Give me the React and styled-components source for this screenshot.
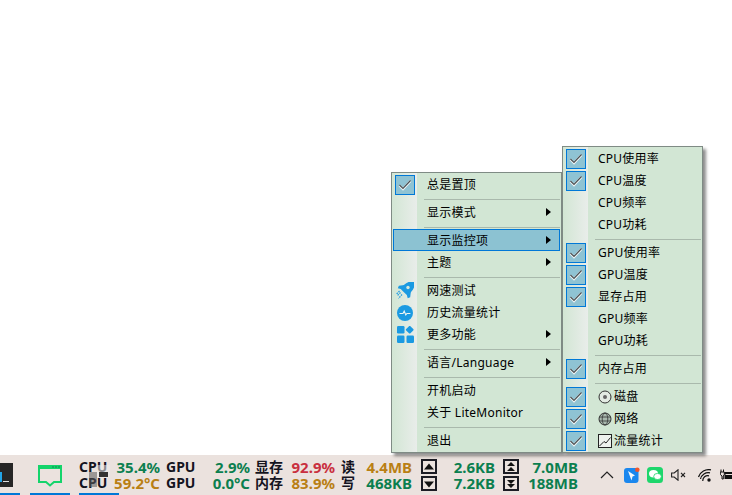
import React from 'react'
import styled, { createGlobalStyle } from 'styled-components'

const GlobalStyle = createGlobalStyle`
  html, body { margin: 0; padding: 0; background: #fff; }
  body { font-family: "Noto Sans", "Noto Sans CJK SC", sans-serif; }
`

const Page = styled.div`
  position: relative;
  width: 732px;
  height: 495px;
  overflow: hidden;
  display: flex;
  flex-direction: column;
  justify-content: flex-end;
`

/* context menus */
const Menu = styled.div`
  position: absolute;
  left: ${p => p.$left}px;
  top: ${p => p.$top}px;
  width: ${p => p.$width}px;
  box-sizing: border-box;
  padding-bottom: 1px;
  border: 1px solid #7f8b85;
  background: linear-gradient(90deg, #d2e6d4 0, #e9edea 25px, #d2e6d4 25px);
  box-shadow: 3px 3px 3px rgba(0, 0, 0, 0.45);
  font-size: 12px;
  letter-spacing: 0.25px;
  color: #000;
  z-index: ${p => p.$z || 1};
`
const Row = styled.div`
  display: flex;
  align-items: center;
  box-sizing: border-box;
  height: 22px;
  margin: 0 1px;
  padding-left: 1px;
  background: ${p => (p.$active ? '#8cc2d2' : 'transparent')};
  outline: ${p => (p.$active ? '1px solid #0078d7' : 'none')};
  outline-offset: -1px;
`
const Slot = styled.div`
  flex: none;
  width: 22px;
  height: 20px;
  margin-top: 1px;
  margin-right: 11px;
  display: flex;
  align-items: center;
  justify-content: center;
`
const CheckBox = styled.div`
  box-sizing: border-box;
  width: 20px;
  height: 20px;
  border: 1px solid #0078d7;
  background: #8fc3d3;
  display: flex;
  align-items: center;
  justify-content: center;
`
const Label = styled.span`
  flex: 1;
  display: flex;
  align-items: center;
  gap: 2px;
  white-space: nowrap;
  line-height: 20px;
  padding-top: 2px;
`
const Arrow = styled.i`
  flex: none;
  width: 0;
  height: 0;
  margin-right: 9px;
  border-left: 5px solid #000;
  border-top: 4px solid transparent;
  border-bottom: 4px solid transparent;
`
const Separator = styled.div`
  height: 1px;
  margin: 4px 1px 1px 32px;
  background: #a9b9ac;
`

/* taskbar */
const Taskbar = styled.div`
  position: relative;
  height: 40px;
  flex: none;
  display: flex;
  background: #ebe2de;
`
const TaskButton = styled.div`
  flex: none;
  box-sizing: border-box;
  width: ${p => p.$width}px;
  margin-left: ${p => p.$gap || 0}px;
  height: 40px;
  padding-top: ${p => p.$top}px;
  border-bottom: 2px solid #0078d7;
`
const Tile = styled.div`
  box-sizing: border-box;
  width: 13px;
  height: 24px;
  background: #262626;
  display: flex;
  align-items: flex-end;
  gap: 1px;
  padding-bottom: 5px;
`
const TileCaret = styled.span`
  width: 2px;
  height: 10px;
  background: #22a5e8;
`
const TilePrompt = styled.span`
  width: 6px;
  height: 1px;
  background: #ddd;
`
const ChatIconWrap = styled.div`
  display: flex;
  justify-content: center;
`
const GhostIcon = styled.svg`
  position: absolute;
  left: 89px;
  top: 10px;
  z-index: 2;
`
const GhostBar = styled.div`
  position: absolute;
  left: 79px;
  bottom: 0;
  width: 40px;
  height: 2px;
  background: #0078d7;
`
const Monitor = styled.div`
  flex: none;
  margin-left: 9px;
  padding-top: 4px;
  display: flex;
  font-weight: 700;
  font-size: 14px;
  line-height: 16px;
  white-space: nowrap;
`
const Col = styled.div`
  flex: none;
  width: ${p => p.$width}px;
  margin-left: ${p => p.$gap || 0}px;
  color: #14141e;
`
const Values = styled(Col)`
  text-align: right;
  font-size: 15px;
`
const Value = styled.div`
  height: 16px;
  color: ${p => p.$color};
`
const ArrowCol = styled.div`
  flex: none;
  margin-left: ${p => p.$gap}px;
  display: flex;
  flex-direction: column;
  gap: 2px;
`
const ArrowBox = styled.div`
  box-sizing: border-box;
  width: 16px;
  height: 15px;
  border: 2px solid #1c1c24;
  display: flex;
  align-items: center;
  justify-content: center;
`
const Tray = styled.div`
  margin-left: auto;
  display: flex;
  align-items: center;
  height: 30px;
  margin-top: 5px;
`
const TrayItem = styled.div`
  flex: none;
  width: ${p => p.$width}px;
  margin-left: ${p => p.$gap}px;
  display: flex;
  justify-content: center;
`

const Check = () => (
  <svg width="16" height="14" viewBox="0 0 16 14">
    <path d="M2.5 7.5 L6 11 L13.5 3" fill="none" stroke="#f2f6f6" strokeWidth="2.4" />
    <path d="M2.5 7 L6 10.5 L13.5 2.5" fill="none" stroke="#4b4f52" strokeWidth="1.2" />
  </svg>
)

const Rocket = () => (
  <svg width="18" height="17" viewBox="0 0 18 17">
    <g transform="rotate(45 11 7)" fill="#1b9ae2">
      <path d="M11-3.500c3.500 2.500 5 6 5 9.500 0 2-.5 4-1.200 5.500H7.200C6.500 10 6 8 6 6c0-3.500 1.500-7 5-9.500z" />
      <path d="M6.500 6 3 10.500 4 13l3.500-2zM15.500 6 19 10.500 18 13l-3.500-2z" />
    </g>
    <circle cx="12" cy="5.500" r="1.700" fill="#d6e8dc" />
    <path stroke="#1b9ae2" strokeWidth="1.200" strokeDasharray="1.500 1" d="M4.500 10.500 1 14M6 12.500 2.500 16.500M3.500 9 .5 12" />
  </svg>
)

const Pulse = () => (
  <svg width="16" height="16" viewBox="0 0 16 16">
    <circle cx="8" cy="8" r="8" fill="#1b9ae2" />
    <path d="M2.500 8.500h3.500l1.200-2.500 1.600 4 1.100-1.500h3.500" fill="none" stroke="#eef6f4" strokeWidth="1.100" />
  </svg>
)

const Blocks = () => (
  <svg width="17" height="17" viewBox="0 0 17 17">
    <g fill="#1b9ae2">
      <rect x="0" y="0" width="7.500" height="7.500" rx="1.200" />
      <rect x="9.700" y="0.700" width="6" height="6" rx="1" transform="rotate(45 12.700 3.700)" />
      <rect x="0" y="9.500" width="7.500" height="7.500" rx="1.200" />
      <rect x="9.500" y="9.500" width="7.500" height="7.500" rx="1.200" />
    </g>
  </svg>
)

const DiskIcon = () => (
  <svg width="14" height="14" viewBox="0 0 14 14">
    <circle cx="7" cy="7" r="6" fill="#e3ebe3" stroke="#333" />
    <circle cx="7" cy="7" r="2" fill="#666" />
  </svg>
)

const GlobeIcon = () => (
  <svg width="14" height="14" viewBox="0 0 14 14" fill="none" stroke="#333">
    <circle cx="7" cy="7" r="6" fill="#a9b8ae" />
    <ellipse cx="7" cy="7" rx="2.800" ry="6" strokeWidth="0.800" />
    <path d="M1 5h12M1 9h12" strokeWidth="0.800" />
  </svg>
)

const ChartIcon = () => (
  <svg width="14" height="14" viewBox="0 0 14 14" fill="none">
    <rect x="0.500" y="0.500" width="13" height="13" stroke="#222" fill="#eef2ee" />
    <path d="M1.500 12 6 7.500l2 1.500 4.500-5.500" stroke="#222" />
  </svg>
)

const ChatIcon = () => (
  <svg width="26" height="24" viewBox="0 0 26 24">
    <path d="M2 2h22v16h-7l-4 3.500-4-3.500H2z" fill="#ebe2de" stroke="#14d46b" strokeWidth="2" />
    <rect x="1" y="1" width="24" height="4" fill="#14d46b" />
    <path d="M15 3h2M18 3h2M21 3h2" stroke="#0c8c50" strokeWidth="1" />
  </svg>
)

const Triangle = ({ up, bar }) => (
  <svg width="10" height="10" viewBox="0 0 10 10">
    {bar ? (
      <path fill="#111" d={up ? 'M5 0 9 4H1zM5 5 9 9H1z' : 'M1 1h8L5 5zM1 5h8L5 9z'} />
    ) : (
      <path fill="#111" d={up ? 'M5 1.500 10 7.500H0z' : 'M0 2.500h10L5 8.500z'} />
    )}
  </svg>
)

const Chevron = () => (
  <svg width="14" height="8" viewBox="0 0 14 8">
    <path d="M1 7 7 1l6 6" fill="none" stroke="#222" strokeWidth="1.200" />
  </svg>
)

const AppIcon = () => (
  <svg width="16" height="16" viewBox="0 0 16 16">
    <rect x="0" y="1" width="14.500" height="15" rx="3" fill="#1a87ee" />
    <path d="M4 4 11 8.500 8.500 9.500 7.500 13.500z" fill="#f4f8fc" />
    <circle cx="13.300" cy="2.700" r="2.300" fill="#f0552b" />
  </svg>
)

const WeChatIcon = () => (
  <svg width="16" height="16" viewBox="0 0 16 16">
    <rect width="16" height="16" rx="3.500" fill="#1ed66c" />
    <ellipse cx="6.500" cy="6.800" rx="4.500" ry="3.700" fill="#fff" />
    <ellipse cx="10.500" cy="9.500" rx="3.800" ry="3.100" fill="#fff" stroke="#1ed66c" strokeWidth="0.800" />
  </svg>
)

const SpeakerIcon = () => (
  <svg width="15" height="12" viewBox="0 0 15 12" fill="none" stroke="#222" strokeWidth="1.100">
    <path d="M.6 4h2.600L7 .8v10.400L3.200 8H.6z" />
    <path d="M10 3.800 14 8M14 3.800 10 8" />
  </svg>
)

const WifiIcon = () => (
  <svg width="14" height="13" viewBox="0 0 14 13" fill="none" stroke="#111" strokeWidth="1.200">
    <path d="M.5 8A11 11 0 0 1 13 .8M2.500 10A8 8 0 0 1 12 3.800M4.800 12A5 5 0 0 1 11 6.800" />
    <circle cx="11" cy="11" r="1.700" fill="#111" stroke="none" />
  </svg>
)

const PowerIcon = () => (
  <svg width="12" height="12" viewBox="0 0 12 12">
    <path d="M1 .5v2.500M3.500.5v2.500M.3 3h4v2.500l-1 1.500v3H2V7L.3 5.500z" fill="none" stroke="#111" strokeWidth="1" />
    <rect x="4.500" y="3" width="7.500" height="7" fill="#111" />
    <rect x="5.500" y="5" width="6.500" height="1" fill="#ebe2de" />
  </svg>
)

const mainItems = [
  { text: '总是置顶', checked: true },
  'sep',
  { text: '显示模式', sub: true },
  'sep',
  { text: '显示监控项', sub: true, active: true },
  { text: '主题', sub: true },
  'sep',
  { text: '网速测试', icon: <Rocket /> },
  { text: '历史流量统计', icon: <Pulse /> },
  { text: '更多功能', sub: true, icon: <Blocks /> },
  'sep',
  { text: '语言/Language', sub: true },
  'sep',
  { text: '开机启动' },
  { text: '关于 LiteMonitor' },
  'sep',
  { text: '退出' },
]

const subItems = [
  { text: 'CPU使用率', checked: true },
  { text: 'CPU温度', checked: true },
  { text: 'CPU频率' },
  { text: 'CPU功耗' },
  'sep',
  { text: 'GPU使用率', checked: true },
  { text: 'GPU温度', checked: true },
  { text: '显存占用', checked: true },
  { text: 'GPU频率' },
  { text: 'GPU功耗' },
  'sep',
  { text: '内存占用', checked: true },
  'sep',
  { text: '磁盘', checked: true, glyph: <DiskIcon /> },
  { text: '网络', checked: true, glyph: <GlobeIcon /> },
  { text: '流量统计', checked: true, glyph: <ChartIcon /> },
]

const GREEN = '#0b7f4f'
const AMBER = '#b97f14'
const RED = '#c9303f'

function MenuRows({ items }) {
  return items.map((item, i) =>
    item === 'sep' ? (
      <Separator key={i} />
    ) : (
      <Row key={i} $active={item.active}>
        <Slot>
          {item.checked ? (
            <CheckBox>
              <Check />
            </CheckBox>
          ) : (
            item.icon
          )}
        </Slot>
        <Label>
          {item.glyph}
          {item.text}
        </Label>
        {item.sub && <Arrow />}
      </Row>
    )
  )
}

function Pair({ width, gap, a, b }) {
  return (
    <Col $width={width} $gap={gap}>
      <div>{a}</div>
      <div>{b}</div>
    </Col>
  )
}

function Reading({ width, a, b, colorA, colorB }) {
  return (
    <Values $width={width}>
      <Value $color={colorA}>{a}</Value>
      <Value $color={colorB}>{b}</Value>
    </Values>
  )
}

export default function App() {
  return (
    <Page>
      <GlobalStyle />
      <Menu $left={391} $top={172} $width={171}>
        <MenuRows items={mainItems} />
      </Menu>
      <Menu $left={562} $top={146} $width={141} $z={2}>
        <MenuRows items={subItems} />
      </Menu>
      <Taskbar>
        <TaskButton $width={20} $top={8}>
          <Tile>
            <TileCaret />
            <TilePrompt />
          </Tile>
        </TaskButton>
        <TaskButton $width={40} $gap={10} $top={9}>
          <ChatIconWrap>
            <ChatIcon />
          </ChatIconWrap>
        </TaskButton>
        <Monitor>
          <Pair width={33} a="CPU" b="CPU" />
          <Reading width={48} a="35.4%" b="59.2°C" colorA={GREEN} colorB={AMBER} />
          <Pair width={31} gap={6} a="GPU" b="GPU" />
          <Reading width={53} a="2.9%" b="0.0°C" colorA={GREEN} colorB={GREEN} />
          <Pair width={30} gap={5} a="显存" b="内存" />
          <Reading width={50} a="92.9%" b="83.9%" colorA={RED} colorB={AMBER} />
          <Pair width={20} gap={6} a="读" b="写" />
          <Reading width={51} a="4.4MB" b="468KB" colorA={AMBER} colorB={GREEN} />
          <ArrowCol $gap={9}>
            <ArrowBox>
              <Triangle up />
            </ArrowBox>
            <ArrowBox>
              <Triangle />
            </ArrowBox>
          </ArrowCol>
          <Reading width={58} a="2.6KB" b="7.2KB" colorA={GREEN} colorB={GREEN} />
          <ArrowCol $gap={8}>
            <ArrowBox>
              <Triangle up bar />
            </ArrowBox>
            <ArrowBox>
              <Triangle bar />
            </ArrowBox>
          </ArrowCol>
          <Reading width={59} a="7.0MB" b="188MB" colorA={GREEN} colorB={GREEN} />
        </Monitor>
        <Tray>
          <TrayItem $width={14}>
            <Chevron />
          </TrayItem>
          <TrayItem $width={16} $gap={10}>
            <AppIcon />
          </TrayItem>
          <TrayItem $width={16} $gap={7}>
            <WeChatIcon />
          </TrayItem>
          <TrayItem $width={15} $gap={8}>
            <SpeakerIcon />
          </TrayItem>
          <TrayItem $width={14} $gap={12}>
            <WifiIcon />
          </TrayItem>
          <TrayItem $width={12} $gap={8}>
            <PowerIcon />
          </TrayItem>
        </Tray>
        <GhostBar />
        <GhostIcon width="21" height="22" viewBox="0 0 21 22">
          <rect x="0" y="7" width="8" height="15" fill="rgba(90,90,90,0.55)" />
          <rect x="8" y="0" width="13" height="13" fill="rgba(235,235,235,0.55)" />
          <rect x="10" y="7" width="9" height="5" fill="#333" />
        </GhostIcon>
      </Taskbar>
    </Page>
  )
}
